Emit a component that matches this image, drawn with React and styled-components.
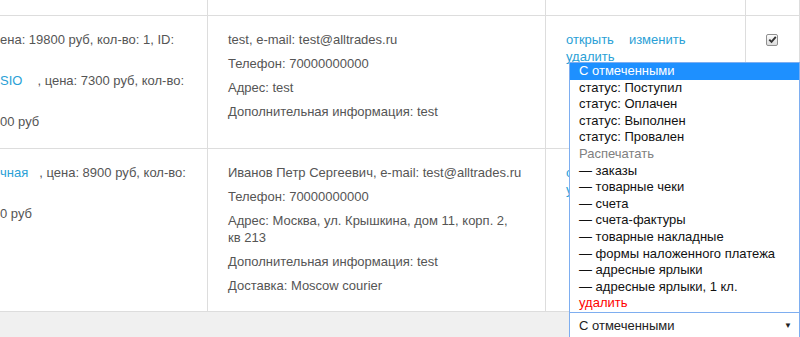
import React from 'react';
import styled, { createGlobalStyle } from 'styled-components';

const GlobalStyle = createGlobalStyle`
  body {
    margin: 0;
    background: #fff;
    font-family: "Liberation Sans", Arial, sans-serif;
    font-size: 13px;
    color: #555;
  }
`;

const Page = styled.div`
  width: 800px;
  height: 337px;
  overflow: hidden;
  position: relative;
`;

const Table = styled.div`
  display: grid;
  grid-template-columns: 208px 338px 200px 1fr;
  grid-template-rows: 16px 133px 163px;
`;

const Cell = styled.div`
  box-sizing: border-box;
  border-right: 1px solid #ddd;
  border-bottom: 1px solid #ddd;
  padding: ${(p) => (p.$empty ? '0' : p.$flush ? '15px 0 0 0' : '15px 20px 0 20px')};
  line-height: 17px;
  overflow: hidden;
`;

const ItemLine = styled.div`
  white-space: nowrap;
  margin-bottom: 24px;
`;

const Info = styled.p`
  margin: 0 0 7px 0;
`;

const Link = styled.a`
  color: #2a9fd6;
  text-decoration: ${(p) => (p.$underline ? 'underline' : 'none')};
  margin-right: ${(p) => p.$gap || 0}px;
  cursor: pointer;
`;

const Actions = styled.div`
  display: flex;
  flex-wrap: wrap;
  column-gap: 15px;
`;

const Check = styled.span`
  display: inline-flex;
  align-items: center;
  justify-content: center;
  box-sizing: border-box;
  width: 12px;
  height: 12px;
  border: 1px solid #8f8f8f;
  border-radius: 2px;
  background: linear-gradient(#fcfcfc, #dcdcdc);
  margin-top: -1px;
`;

const Footer = styled.div`
  height: 26px;
  background: #f0f0f0;
  display: flex;
  padding-left: 569px;
`;

const Select = styled.div`
  position: relative;
  box-sizing: border-box;
  width: 231px;
  height: 28px;
  border: 1px solid #7eaef0;
  background: #fff;
  color: #222;
  display: flex;
  align-items: flex-start;
  justify-content: space-between;
  padding: 4px 7px 0 9px;
  line-height: 17px;
`;

const Arrow = styled.span`
  font-size: 8px;
  color: #222;
  line-height: 17px;
`;

const List = styled.ul`
  position: absolute;
  left: -1px;
  bottom: 100%;
  width: 231px;
  box-sizing: border-box;
  margin: 0;
  padding: 0;
  list-style: none;
  background: #fff;
  border: 1px solid #7eaef0;
`;

const Option = styled.li`
  height: 16.6px;
  line-height: 16.6px;
  padding-left: 9px;
  white-space: nowrap;
  background: ${(p) => (p.$active ? '#1e90ff' : 'transparent')};
  color: ${(p) => (p.$active ? '#fff' : p.$muted ? '#808080' : p.$danger ? '#f00' : '#111')};
`;

const options = [
  { label: 'С отмеченными', active: true },
  { label: 'статус: Поступил' },
  { label: 'статус: Оплачен' },
  { label: 'статус: Выполнен' },
  { label: 'статус: Провален' },
  { label: 'Распечатать', muted: true },
  { label: '— заказы' },
  { label: '— товарные чеки' },
  { label: '— счета' },
  { label: '— счета-фактуры' },
  { label: '— товарные накладные' },
  { label: '— формы наложенного платежа' },
  { label: '— адресные ярлыки' },
  { label: '— адресные ярлыки, 1 кл.' },
  { label: 'удалить', danger: true },
];

function Checkmark() {
  return (
    <Check>
      <svg width="9" height="9" viewBox="0 0 9 9">
        <path d="M1.3 4.6 L3.5 6.8 L7.8 1.8" fill="none" stroke="#333" strokeWidth="1.9" />
      </svg>
    </Check>
  );
}

function RowActions({ underline }) {
  return (
    <Actions>
      <Link>открыть</Link>
      <Link>изменить</Link>
      <Link $underline={underline}>удалить</Link>
    </Actions>
  );
}

export default function App() {
  return (
    <Page>
      <GlobalStyle />
      <Table>
        <Cell $empty />
        <Cell $empty />
        <Cell $empty />
        <Cell $empty />

        <Cell $flush>
          <ItemLine>ена: 19800 руб, кол-во: 1, ID:</ItemLine>
          <ItemLine>
            <Link $gap={15}>SIO</Link>, цена: 7300 руб, кол-во:
          </ItemLine>
          <ItemLine>00 руб</ItemLine>
        </Cell>
        <Cell>
          <Info>test, e-mail: test@alltrades.ru</Info>
          <Info>Телефон: 70000000000</Info>
          <Info>Адрес: test</Info>
          <Info>Дополнительная информация: test</Info>
        </Cell>
        <Cell>
          <RowActions underline />
        </Cell>
        <Cell>
          <Checkmark />
        </Cell>

        <Cell $flush>
          <ItemLine>
            <Link $gap={11}>чная</Link>, цена: 8900 руб, кол-во:
          </ItemLine>
          <ItemLine>0 руб</ItemLine>
        </Cell>
        <Cell>
          <Info>Иванов Петр Сергеевич, e-mail: test@alltrades.ru</Info>
          <Info>Телефон: 70000000000</Info>
          <Info>Адрес: Москва, ул. Крышкина, дом 11, корп. 2, кв{'\u00a0'}213</Info>
          <Info>Дополнительная информация: test</Info>
          <Info>Доставка: Moscow courier</Info>
        </Cell>
        <Cell>
          <RowActions />
        </Cell>
        <Cell />
      </Table>
      <Footer>
        <Select>
          <span>С отмеченными</span>
          <Arrow>▼</Arrow>
          <List>
            {options.map((o) => (
              <Option key={o.label} $active={o.active} $muted={o.muted} $danger={o.danger}>
                {o.label}
              </Option>
            ))}
          </List>
        </Select>
      </Footer>
    </Page>
  );
}
